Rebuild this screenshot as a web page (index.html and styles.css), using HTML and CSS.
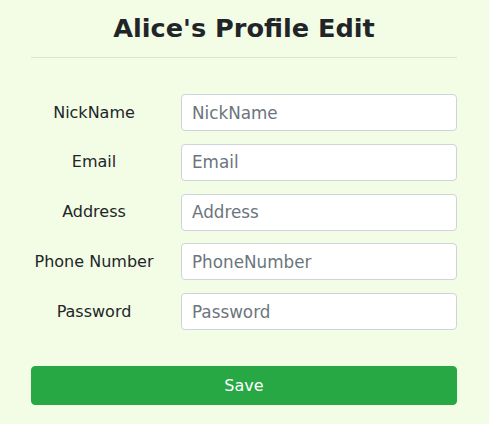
FILE: index.html
```html
<!DOCTYPE html>
<html lang="en">
<head>
<meta charset="utf-8">
<title>Alice's Profile Edit</title>
<link rel="stylesheet" href="styles.css">
</head>
<body>
<div class="page">
  <h1 class="title">Alice's Profile Edit</h1>
  <hr class="divider">
  <form class="form">
    <div class="rows">
      <label class="label" for="nick">NickName</label>
      <input class="field" id="nick" type="text" placeholder="NickName">
      <label class="label" for="email">Email</label>
      <input class="field" id="email" type="text" placeholder="Email">
      <label class="label" for="addr">Address</label>
      <input class="field" id="addr" type="text" placeholder="Address">
      <label class="label" for="phone">Phone Number</label>
      <input class="field" id="phone" type="text" placeholder="PhoneNumber">
      <label class="label" for="pw">Password</label>
      <input class="field" id="pw" type="password" placeholder="Password">
    </div>
    <button class="save" type="button">Save</button>
  </form>
</div>
</body>
</html>
```

FILE: styles.css
```css
html, body {
  margin: 0;
  padding: 0;
  background: #f3fde5;
  font-family: "DejaVu Sans", sans-serif;
  color: #212529;
}

.page {
  padding: 0 32px 0 31px;
}

.title {
  margin: 13px 0 13px;
  font-size: 25.6px;
  line-height: 31px;
  font-weight: bold;
  text-align: center;
  color: #212529;
}

.divider {
  margin: 0;
  border: 0;
  border-top: 1px solid #dbe4cf;
}

.form {
  margin-top: 36px;
}

.rows {
  display: grid;
  grid-template-columns: 126px 1fr;
  column-gap: 24px;
  row-gap: 12.75px;
  align-items: center;
}

.label {
  font-size: 16px;
  line-height: 24px;
  text-align: center;
  color: #212529;
}

.field {
  box-sizing: border-box;
  height: 37px;
  width: 100%;
  margin: 0;
  padding: 0 12px 0 10px;
  border: 1px solid #ced4da;
  border-radius: 4px;
  background: #fff;
  font-family: "DejaVu Sans", sans-serif;
  font-size: 16.8px;
  color: #495057;
  outline: none;
}

.field::placeholder {
  color: #6c757d;
  opacity: 1;
}

.save {
  display: block;
  box-sizing: border-box;
  width: 100%;
  height: 39px;
  margin-top: 36px;
  padding: 0;
  border: 1px solid #28a745;
  border-radius: 4px;
  background: #28a745;
  color: #fff;
  font-family: "DejaVu Sans", sans-serif;
  font-size: 16px;
  line-height: 24px;
}
```
